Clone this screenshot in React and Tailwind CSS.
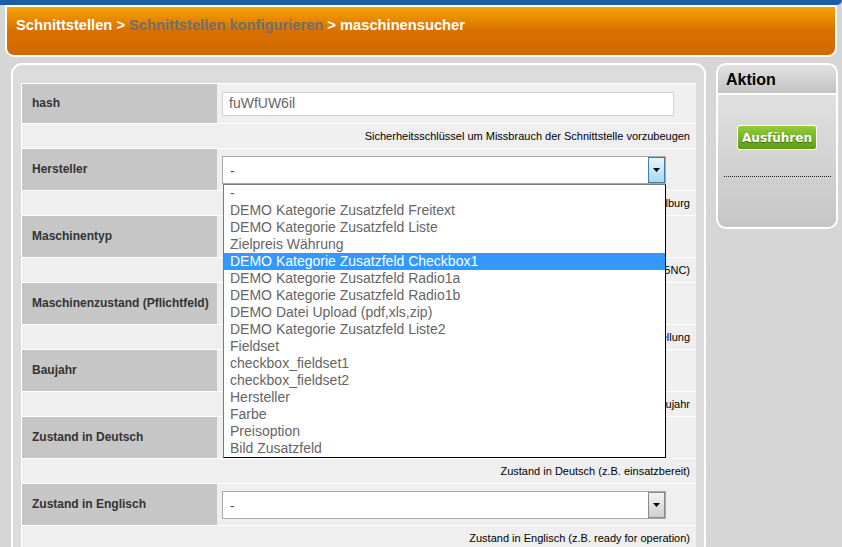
const fields = [
  { label: 'hash', kind: 'input', value: 'fuWfUW6il', help: 'Sicherheitsschlüssel um Missbrauch der Schnittstelle vorzubeugen' },
  { label: 'Hersteller', kind: 'select', open: true, help: 'Hersteller der Maschine (z.B. Heidelburg' },
  { label: 'Maschinentyp', kind: 'none', help: 'Typ der Maschine (z.B. DMU 65 5NC)' },
  { label: 'Maschinenzustand (Pflichtfeld)', kind: 'none', help: 'Zustand der Maschine (z.B. Neu, Vorstellung' },
  { label: 'Baujahr', kind: 'none', help: 'Maschinen Baujahr' },
  { label: 'Zustand in Deutsch', kind: 'none', help: 'Zustand in Deutsch (z.B. einsatzbereit)' },
  { label: 'Zustand in Englisch', kind: 'select', help: 'Zustand in Englisch (z.B. ready for operation)' },
];

const options = [
  '-',
  'DEMO Kategorie Zusatzfeld Freitext',
  'DEMO Kategorie Zusatzfeld Liste',
  'Zielpreis Währung',
  'DEMO Kategorie Zusatzfeld Checkbox1',
  'DEMO Kategorie Zusatzfeld Radio1a',
  'DEMO Kategorie Zusatzfeld Radio1b',
  'DEMO Datei Upload (pdf,xls,zip)',
  'DEMO Kategorie Zusatzfeld Liste2',
  'Fieldset',
  'checkbox_fieldset1',
  'checkbox_fieldset2',
  'Hersteller',
  'Farbe',
  'Preisoption',
  'Bild Zusatzfeld',
];

function Arrow() {
  return (
    <svg width="7" height="4" viewBox="0 0 7 4">
      <path d="M0 0h7L3.5 4z" fill="#000" />
    </svg>
  );
}

function Select({ open }) {
  return (
    <div className="relative">
      <div className="w-[444px] h-[28px] border border-[#a9a9a9] bg-white flex items-center">
        <span className="flex-1 pl-[7px] pt-[3px] text-[14px] text-[#555]">-</span>
        {open ? (
          <div className="w-[17px] h-[26px] border border-[#3c7fb1] bg-gradient-to-b from-[#e8f5fd] to-[#a7d8f5] flex items-center justify-center">
            <Arrow />
          </div>
        ) : (
          <div className="w-[17px] h-[26px] border border-[#8a8a8a] bg-gradient-to-b from-[#f3f3f3] to-[#cfcfcf] flex items-center justify-center">
            <Arrow />
          </div>
        )}
      </div>
      {open && (
        <div className="absolute left-[1px] top-[28px] z-10 w-[443px] bg-white border border-[#7a7a7a] border-r-black border-b-black">
          {options.map((o, i) => (
            <div
              key={o}
              className={
                i === 4
                  ? 'h-[17px] leading-[17px] pl-[6px] text-[14px] bg-[#3399ff] text-white'
                  : 'h-[17px] leading-[17px] pl-[6px] text-[14px] text-[#666]'
              }
            >
              {o}
            </div>
          ))}
        </div>
      )}
    </div>
  );
}

export default function App() {
  return (
    <div className="w-[842px] h-[547px] overflow-hidden bg-[#d6d6d6] font-['Liberation_Sans',Arial,sans-serif]">
      <div className="h-[5px] bg-[#1f5ca8] rounded-br-[6px]" />
      <div className="mx-[5px] h-[52px] rounded-b-[9px] border-2 border-white bg-gradient-to-b from-[#f6a300] via-[#d87000] to-[#d16900] pl-[9px] pt-[7px]">
        <p className="text-[14.7px] font-bold text-white">
          Schnittstellen &gt; <span className="text-[#6f6f6f]">Schnittstellen konfigurieren</span> &gt; maschinensucher
        </p>
      </div>

      <div className="flex mt-[6px] ml-[11px]">
        <div className="w-[695px] h-[600px] rounded-t-[11px] border-2 border-b-0 border-white bg-[#dcdcdc] px-[8px] pt-[18px]">
          <div className="border-t border-l border-white">
            {fields.map((f, idx) => (
              <div key={f.label}>
                <div className={idx === 0 ? 'flex h-[40px] border-b border-white' : 'flex h-[42px] border-b border-white'}>
                  <div className="w-[195px] bg-[#c6c6c6] flex items-center pl-[10px] pb-[2px] text-[12px] font-bold text-[#333]">
                    {f.label}
                  </div>
                  <div className="flex-1 bg-[#efefef] flex items-center pl-[5px]">
                    {f.kind === 'input' && (
                      <div className="w-[452px] h-[24px] border border-[#cfcfcf] bg-white pl-[6px] flex items-center text-[14px] text-[#666]">
                        {f.value}
                      </div>
                    )}
                    {f.kind === 'select' && <Select open={f.open} />}
                  </div>
                </div>
                <div className="h-[25px] border-b border-white bg-[#efefef] flex items-center justify-end pr-[6px] text-[11px] text-black">
                  {f.help}
                </div>
              </div>
            ))}
          </div>
        </div>

        <div className="ml-[10px] w-[122px] h-[166px] rounded-[10px] border-2 border-white overflow-hidden bg-gradient-to-b from-[#e6e6e6] to-[#c6c6c6]">
          <div className="h-[30px] border-b-2 border-white bg-gradient-to-b from-[#e2e2e2] to-[#c2c2c2] pl-[8px] pt-[2px] flex items-center text-[16px] font-bold text-black">
            Aktion
          </div>
          <div className="flex flex-col items-center pt-[30px]">
            <div className="w-[80px] h-[25px] rounded-[3px] border border-white bg-gradient-to-b from-[#94cc3c] to-[#5b9d12] flex items-center justify-center font-['DejaVu_Sans',Verdana,sans-serif] text-[12px] font-bold text-white [text-shadow:0_1px_1px_#3a6b0a]">
              Ausführen
            </div>
            <div className="mt-[26px] w-[107px] border-t border-dotted border-[#222]" />
          </div>
        </div>
      </div>
    </div>
  );
}
